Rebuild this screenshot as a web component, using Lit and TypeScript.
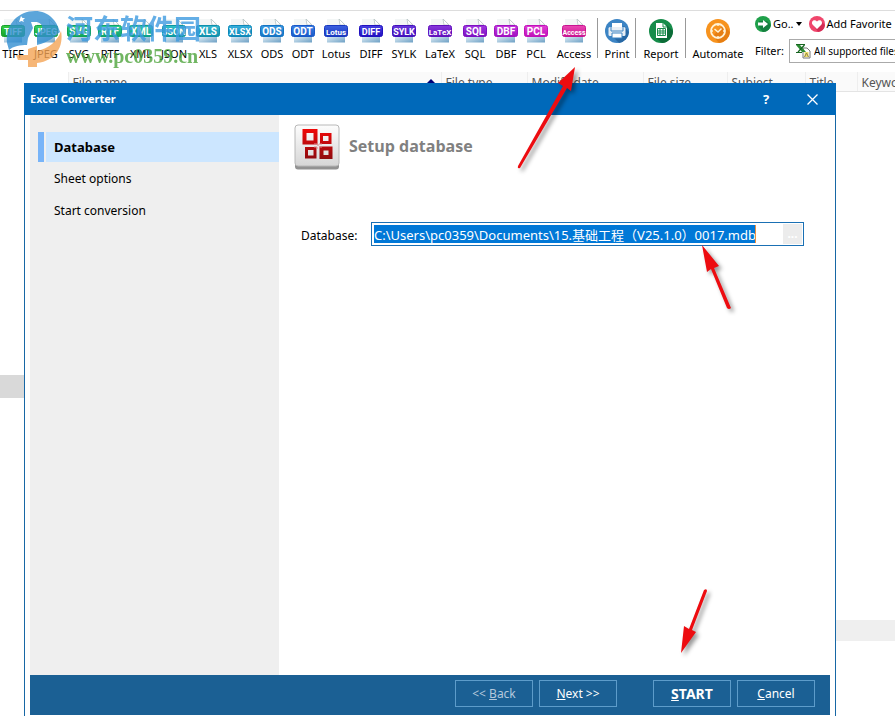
import { LitElement, html, css, svg } from "lit";
import { customElement, property } from "lit/decorators.js";

interface Format {
  name: string;
  color: string;
  light: string;
}

const FORMATS: Format[] = [
  { name: "TIFF", color: "#16a02c", light: "#35d040" },
  { name: "JPEG", color: "#16a440", light: "#38d060" },
  { name: "SVG", color: "#10a458", light: "#30cc7c" },
  { name: "RTF", color: "#10a46c", light: "#2ccc94" },
  { name: "XML", color: "#0f9f88", light: "#30c8b0" },
  { name: "JSON", color: "#0d98a0", light: "#30c0c8" },
  { name: "XLS", color: "#0f90ac", light: "#38b8d0" },
  { name: "XLSX", color: "#0d88b8", light: "#38b0dc" },
  { name: "ODS", color: "#1474c4", light: "#3898e0" },
  { name: "ODT", color: "#1858c8", light: "#3c80e4" },
  { name: "Lotus", color: "#1838c0", light: "#3c60e0" },
  { name: "DIFF", color: "#2010c0", light: "#4440e0" },
  { name: "SYLK", color: "#4210bc", light: "#6838dc" },
  { name: "LaTeX", color: "#6010bc", light: "#8838dc" },
  { name: "SQL", color: "#7c10c0", light: "#a038e0" },
  { name: "DBF", color: "#a010c0", light: "#c438dc" },
  { name: "PCL", color: "#c010b8", light: "#e040d4" },
  { name: "Access", color: "#c81490", light: "#ec48b4" },
];

@customElement("format-icon")
export class FormatIcon extends LitElement {
  @property() name = "";
  @property() color = "";
  @property() light = "";

  static styles = css`
    :host { display: block; height: 26px; }
    .label { font-family: "Liberation Sans Narrow", "Roboto", sans-serif; font-weight: 700; fill: #fff; text-anchor: middle; }
    .s3 { font-size: 10px; }
    .s4 { font-size: 9px; }
    .s5 { font-size: 8px; }
    .s6 { font-size: 7px; }
  `;

  render() {
    const size = `label s${this.name.length}`;
    return html`<svg width="26" height="26" viewBox="0 0 26 26" aria-hidden="true">
      <defs>
        <linearGradient id="b" x1="0" y1="0" x2="0" y2="1">
          <stop offset="0" stop-color=${this.light} /><stop offset="1" stop-color=${this.color} />
        </linearGradient>
        <linearGradient id="p" x1="0" y1="0" x2="1" y2="1">
          <stop offset="0" stop-color="#e4f1f8" /><stop offset="1" stop-color="#6c9fc4" />
        </linearGradient>
      </defs>
      <path d="M4 1H17L22 6V24H4Z" fill="#f3f6f6" />
      <path d="M16 1L22 7H17Z" fill="#fff" stroke="#b8c4c4" stroke-width=".8" />
      <path d="M4 18H22V24.500H4Z" fill="url(#p)" />
      <rect x="1.500" y="7.500" width="23" height="11" rx="2" fill="url(#b)" stroke=${this.color} />
      ${svg`<text class=${size} x="13" y="16.500">${this.name}</text>`}
    </svg>`;
  }
}

const printIcon = html`<svg width="26" height="26" viewBox="0 0 26 26" aria-hidden="true">
  <circle cx="13" cy="13" r="12" fill="#3c84c4" />
  <path d="M20 8L25 14A12 12 0 0 1 15 25L8 18Z" fill="#2868a4" />
  <path d="M8 5H18V10H8Z" fill="#fff" />
  <rect x="4.500" y="9" width="17" height="9" rx="1.500" fill="#e8eef4" />
  <path d="M7 9V13H19V9" fill="none" stroke="#3c84c4" />
  <path d="M8 15H18V20H8Z" fill="#fff" stroke="#3c84c4" />
</svg>`;

const reportIcon = html`<svg width="26" height="26" viewBox="0 0 26 26" aria-hidden="true">
  <circle cx="13" cy="13" r="12" fill="#168c4a" />
  <path d="M19 7L25 13A12 12 0 0 1 14 25L8 20Z" fill="#0c6c38" />
  <path d="M8 5H15L19 9V20H8Z" fill="#fff" />
  <path d="M15 5V9H19" fill="none" stroke="#168c4a" />
  <path d="M9.500 10.500H17.500V17.500H9.500ZM9.500 13H17.500M9.500 15H17.500M12 10.500V17.500M15 10.500V17.500" fill="none" stroke="#168c4a" />
</svg>`;

const clockIcon = html`<svg width="26" height="26" viewBox="0 0 26 26" aria-hidden="true">
  <circle cx="13" cy="13" r="12" fill="#f7931e" />
  <path d="M18 7L25 14A12 12 0 0 1 14 25L8 18Z" fill="#e67e12" />
  <circle cx="13" cy="13" r="7" fill="none" stroke="#fff3d8" stroke-width="1.800" />
  <path d="M9.500 11L13 14L16.500 10.500M13 6V8M13 18V20M6 13H8M18 13H20" fill="none" stroke="#fff3d8" stroke-width="1.500" />
</svg>`;

const goIcon = html`<svg width="16" height="16" viewBox="0 0 16 16" aria-hidden="true">
  <circle cx="8" cy="8" r="8" fill="#1fa04a" />
  <path d="M4 5H12L16 9A8 8 0 0 1 8 16L4 11Z" fill="#168040" />
  <path d="M3 6.500H8V4L13 8L8 12V9.500H3Z" fill="#fff" />
</svg>`;

const heartIcon = html`<svg width="16" height="16" viewBox="0 0 16 16" aria-hidden="true">
  <circle cx="8" cy="8" r="8" fill="#f0466c" />
  <path d="M12 5L16 9A8 8 0 0 1 9 16L5 10Z" fill="#d42c54" />
  <path d="M8 13L3.500 8.500C1.500 5.500 5.500 2.500 8 5.500C10.500 2.500 14.500 5.500 12.500 8.500Z" fill="#fff" />
</svg>`;

const sheetIcon = html`<svg width="16" height="16" viewBox="0 0 16 16" aria-hidden="true">
  <path d="M8 5H12L15 8V15H8Z" fill="#fff" stroke="#777" />
  <path d="M9.500 9H13.500V14H9.500Z" fill="#f2df6c" />
  <path d="M9.500 14L11.500 10L13.500 14" fill="none" stroke="#8c8444" />
  <path d="M1 2H5L11 9H7Z" fill="#2c8c34" />
  <path d="M9.500 2L3 9M1 1.500H10M1 9.500H7" stroke="#176420" stroke-width="1.200" />
</svg>`;

const databaseIcon = html`<svg class="db-icon" width="46" height="46" viewBox="0 0 46 46" aria-hidden="true">
  <defs>
    <linearGradient id="tile" x1="0" y1="0" x2="0" y2="1">
      <stop offset="0" stop-color="#fdfdfd" /><stop offset="1" stop-color="#d6d6d6" />
    </linearGradient>
    <linearGradient id="red" gradientUnits="userSpaceOnUse" x1="0" y1="5" x2="0" y2="36">
      <stop offset="0" stop-color="#f00808" /><stop offset="1" stop-color="#8c0c10" />
    </linearGradient>
  </defs>
  <rect x="1" y="2" width="44" height="43.500" rx="3" fill="#929292" />
  <rect x="1" y="1" width="44" height="41" rx="3" fill="url(#tile)" stroke="#b8b8b8" />
  <g fill="none" stroke="url(#red)">
    <path d="M10.500 7H21.500V18.500H10.500Z" stroke-width="4" />
    <path d="M27.500 10.500H36V18.500H27.500Z" stroke-width="3" />
    <path d="M12.500 24.500H21V33H12.500Z" stroke-width="3" />
    <path d="M27.500 24.500H36.500V33H27.500Z" stroke-width="4" />
  </g>
  <path d="M20 20H24V22M25 20H28M20 23H23V25M25 23H28" stroke="#d88" fill="none" />
</svg>`;

const watermarkLogo = html`<svg width="66" height="64" viewBox="0 0 66 64" aria-hidden="true">
  <path d="M7 39C5 22 17 7 35 7C49 7 57 17 60 28C55 32 50 38 37 41V29C43 28 45 20 37 18H31L33 24L28 34L27 41C21 41 13 42 9 46Z" fill="#338fd2" />
  <path d="M61 27C64 42 56 57 37 59V47C49 44 57 38 61 27Z" fill="#f4a556" />
  <path d="M28 45L37 42V63H28V56H18L16 51H28Z" fill="#f4a556" />
  <path d="M21 12L22.500 14L25 14L23 16L24 18L21.500 17L19 18L20 15Z" fill="#fff" />
</svg>`;

@customElement("app-root")
export class AppRoot extends LitElement {
  static styles = css`
    :host {
      display: flex; flex-direction: column; position: relative; height: 100vh; overflow: hidden;
      background: #fff; color: #000; font: 11px/16px "Noto Sans", "Noto Sans CJK SC", sans-serif;
    }
    * { box-sizing: border-box; }
    button { font: inherit; color: inherit; background: none; border: 0; padding: 0; margin: 0; white-space: nowrap; }
    svg { display: block; }

    .toolbar { display: flex; flex: none; height: 62px; margin-top: 10px; border-top: 1px solid #ddd; }
    .tools {
      display: grid; flex: none; margin-left: -3px; padding-top: 7px; align-items: start;
      grid-template-columns: 32px 34px 32px 30px 32px 34px 34px 30px 34px 28px 38px 32px 34px 38px 32px 30px 30px 46px 2px 36px 2px 48px 2px 62px;
    }
    .tool { display: flex; flex-direction: column; align-items: center; gap: 2px; }
    .rule { width: 1px; height: 40px; background: #999; }
    .side { display: flex; flex-direction: column; flex: 1; min-width: 0; padding: 5px 0 0 6px; gap: 7px; }
    .links, .filter { display: flex; align-items: center; white-space: nowrap; }
    .links { gap: 7px; }
    .links button { display: flex; align-items: center; gap: 2px; }
    .caret { width: 0; border: 3px solid transparent; border-top: 4px solid #000; border-bottom: 0; }
    .filter { gap: 5px; }
    .combo { display: flex; flex: none; align-items: center; gap: 3px; height: 24px; width: 150px; border: 1px solid #aaa; padding-left: 5px; }
    .combo select { flex: 1; appearance: none; border: 0; padding: 0; background: none; font: inherit; font-size: 10px; color: inherit; }

    .files { flex: none; width: 100%; table-layout: fixed; border-collapse: collapse; color: #555; font-size: 12px; }
    .files th { height: 19px; padding: 3px 0 0 4px; text-align: left; font-weight: 400; line-height: 15px; white-space: nowrap; overflow: hidden; background: #fafafa; border-bottom: 1px solid #e4e4e4; }
    .files th + th { border-left: 1px solid #eee; }
    .files th.tree-head { background: #fff; border-bottom: 0; }
    .c-tree { width: 68px; } .c-name { width: 373px; } .c-type { width: 86px; } .c-date { width: 116px; }
    .c-size { width: 84px; } .c-subject { width: 78px; } .c-title { width: 52px; }
    .name-head { display: flex; justify-content: space-between; padding-right: 6px; }
    .sort { width: 0; height: 0; margin-top: 4px; border: 4px solid transparent; border-top: 0; border-bottom: 4px solid #007; }
    .work { display: flex; flex: 1; }
    .tree { width: 35px; padding-top: 283px; }
    .tree-row { height: 23px; background: #d9d9d9; }
    .list { display: flex; flex: 1; flex-direction: column; justify-content: flex-end; padding-bottom: 75px; }
    .band { height: 21px; background: #efefef; }

    .watermark { position: absolute; left: 0; top: 4px; display: flex; opacity: .8; pointer-events: none; white-space: nowrap; }
    .mark-text { display: flex; flex-direction: column; padding-top: 8px; }
    .mark-name { font: 700 27px/32px "Noto Sans CJK SC", sans-serif; color: #3e9be0; }
    .mark-url { font: 700 20px/24px "Liberation Serif", serif; color: #4ea43c; }

    .dialog {
      position: absolute; left: 24px; right: 59px; top: 83px; bottom: 0; display: flex; flex-direction: column;
      background: #fff; border: 1px solid #1767a5; border-top: 0; border-bottom: 0; font-size: 12px;
    }
    .titlebar { display: flex; flex: none; align-items: center; height: 32px; margin: 0 -1px; padding: 0 17px 0 6px; background: #0069ba; color: #fff; }
    .titlebar h1 { flex: 1; margin: 0; font-size: 11px; font-weight: 700; }
    .titlebar button { display: flex; justify-content: center; width: 14px; font-weight: 700; font-size: 13px; }
    .titlebar button + button { margin-left: 32px; }
    .panes { display: flex; flex: 1; padding: 0 5px; }
    .steps { display: flex; flex-direction: column; gap: 2px; width: 249px; padding: 17px 0 0 8px; background: #efefef; }
    .steps button { height: 30px; padding: 0 0 0 10px; border-left: 6px solid transparent; text-align: left; }
    .steps .current { font-weight: 700; font-size: 13px; border-left-color: #78b4f8; background: #cce6ff; background-clip: padding-box; box-shadow: inset 2px 0 #efefef; }
    .content { flex: 1; padding: 9px 26px 0 15px; }
    .heading { display: flex; align-items: flex-start; gap: 9px; }
    .heading h2 { margin: 10px 0 0; font: 700 16px/24px "Open Sans", "Noto Sans", sans-serif; color: #808080; }
    .field { display: flex; align-items: center; margin-top: 52px; padding-left: 7px; }
    .field label { width: 70px; padding-top: 3px; }
    .path { display: flex; flex: 1; align-items: center; justify-content: space-between; height: 24px; border: 1px solid #1a70b4; padding: 0 1px 0 2px; }
    .path input { width: 382px; height: 18px; border: 0; border-right: 1px solid #f09040; border-radius: 0; padding: 0; outline: 0; background: #0078d7; color: #fff; font: inherit; font-size: 13px; }
    .path button { width: 19px; height: 20px; background: #ececec; color: #fff; font-weight: 700; }
    .actions { display: flex; flex: none; justify-content: flex-end; align-items: flex-start; gap: 6px; height: 40px; margin: 0 5px 1px; padding: 5px 15px 0 0; background: #1b6094; color: #fff; }
    .actions button { width: 78px; height: 27px; border: 1px solid #5d9cca; }
    .actions .back { color: #b4c8dc; }
    .actions .start { margin-left: 30px; font-weight: 700; font-size: 14px; }

    .arrow { position: absolute; overflow: visible; pointer-events: none; filter: drop-shadow(3px 3px 2px rgba(0, 0, 0, .4)); fill: #ed0c10; }
    .to-access { left: 516px; top: 66px; }
    .to-path { left: 701px; top: 244px; }
    .to-start { left: 680px; top: 588px; }
  `;

  render() {
    return html`
      <header class="toolbar">
        <nav class="tools">
          ${FORMATS.map((f) => html`<button class="tool">
            <format-icon name=${f.name} color=${f.color} light=${f.light}></format-icon>${f.name}
          </button>`)}
          <span class="rule"></span>
          <button class="tool">${printIcon}Print</button>
          <span class="rule"></span>
          <button class="tool">${reportIcon}Report</button>
          <span class="rule"></span>
          <button class="tool">${clockIcon}Automate</button>
        </nav>
        <div class="side">
          <div class="links">
            <button>${goIcon}Go..<span class="caret"></span></button>
            <button>${heartIcon}Add Favorite</button>
          </div>
          <div class="filter">
            <label for="filter">Filter:</label>
            <div class="combo">${sheetIcon}<select id="filter"><option>All supported files</option></select></div>
          </div>
        </div>
      </header>

      <table class="files">
        <colgroup>
          <col class="c-tree" /><col class="c-name" /><col class="c-type" /><col class="c-date" />
          <col class="c-size" /><col class="c-subject" /><col class="c-title" /><col />
        </colgroup>
        <thead>
          <tr>
            <th class="tree-head"></th>
            <th><div class="name-head">File name<span class="sort"></span></div></th>
            <th>File type</th><th>Modify date</th><th>File size</th><th>Subject</th><th>Title</th><th>Keywords</th>
          </tr>
        </thead>
      </table>
      <main class="work">
        <div class="tree"><div class="tree-row"></div></div>
        <div class="list"><div class="band"></div></div>
      </main>

      <div class="watermark">
        ${watermarkLogo}
        <div class="mark-text"><span class="mark-name">河东软件园</span><span class="mark-url">www.pc0359.cn</span></div>
      </div>

      <section class="dialog" role="dialog" aria-labelledby="title">
        <div class="titlebar">
          <h1 id="title">Excel Converter</h1>
          <button aria-label="Help">?</button>
          <button aria-label="Close">
            <svg width="11" height="11" viewBox="0 0 11 11"><path d="M.5.5L10.500 10.500M10.500.5L.5 10.500" stroke="#fff" stroke-width="1.300" /></svg>
          </button>
        </div>
        <div class="panes">
          <nav class="steps">
            <button class="current">Database</button>
            <button>Sheet options</button>
            <button>Start conversion</button>
          </nav>
          <div class="content">
            <div class="heading">${databaseIcon}<h2>Setup database</h2></div>
            <div class="field">
              <label for="path">Database:</label>
              <div class="path">
                <input id="path" type="text" value="C:\\Users\\pc0359\\Documents\\15.基础工程（V25.1.0）0017.mdb" />
                <button aria-label="Browse">...</button>
              </div>
            </div>
          </div>
        </div>
        <footer class="actions">
          <button class="back">&lt;&lt; <u>B</u>ack</button>
          <button><u>N</u>ext &gt;&gt;</button>
          <button class="start"><u>S</u>TART</button>
          <button><u>C</u>ancel</button>
        </footer>
      </section>

      <svg class="arrow to-access" width="62" height="104" aria-hidden="true"><path d="M59 1L55 25L51 22L4 102Q1 103 2 100L47 20L42 17Z" /></svg>
      <svg class="arrow to-path" width="32" height="66" aria-hidden="true"><path d="M1 1L18 22L13 24L30 64Q28 66 26 64L10 25L6 28Z" /></svg>
      <svg class="arrow to-start" width="28" height="66" aria-hidden="true"><path d="M1 65L4 38L9 41L24 2Q27 0 27 3L12 42L16 44Z" /></svg>
    `;
  }
}
